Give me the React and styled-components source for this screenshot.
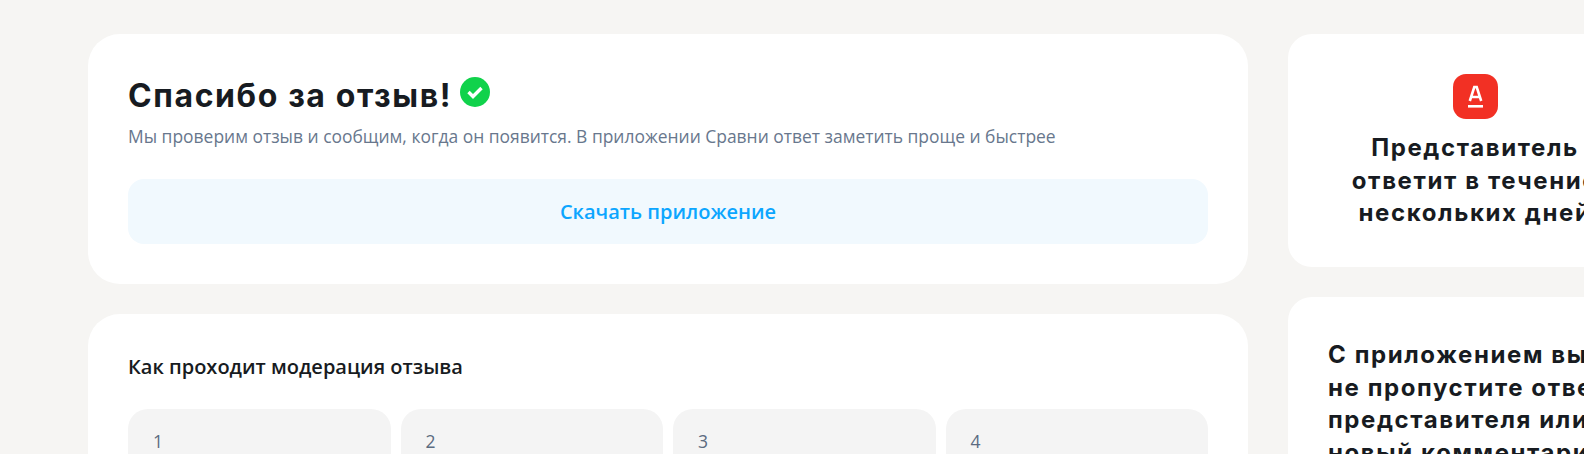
import * as React from "react";
import styled, {createGlobalStyle} from "styled-components";

const GlobalStyle = createGlobalStyle`
  html, body {
    margin: 0;
    padding: 0;
    height: 454px;
    overflow: hidden;
    background: #f6f5f3;
  }
  * {
    box-sizing: border-box;
  }
`;

const Page = styled.div`
  display: grid;
  grid-template-columns: 1160px 374px;
  column-gap: 40px;
  width: 1662px;
  padding: 34px 0 0 88px;
  font-family: "Open Sans", "Liberation Sans", sans-serif;
  color: #171b21;
`;

const Column = styled.div`
  display: flex;
  flex-direction: column;
  gap: 30px;
`;

const Card = styled.section`
  background: #fff;
  border-radius: ${props => props.$radius}px;
  padding: ${props => props.$padding};
`;

const Title = styled.h1`
  display: flex;
  align-items: flex-start;
  gap: 8px;
  margin: 0;
  font-family: "Inter", sans-serif;
  font-size: 32px;
  font-weight: 700;
  letter-spacing: 1.6px;
  line-height: 44px;
`;

const CheckIcon = styled.svg`
  width: 30px;
  height: 30px;
  margin-top: 3px;
`;

const Subtitle = styled.p`
  margin: 6px 0 0;
  font-size: 17.45px;
  line-height: 24px;
  color: #68778d;
`;

const DownloadButton = styled.button`
  display: block;
  width: 100%;
  height: 65px;
  margin-top: 31px;
  border: 0;
  border-radius: 16px;
  background: #f1f9fe;
  color: #0ca6ff;
  font-family: inherit;
  font-size: 20px;
  font-weight: 600;
`;

const SectionTitle = styled.h2`
  margin: 0;
  font-size: 20px;
  font-weight: 600;
  line-height: 26px;
`;

const Steps = styled.div`
  display: grid;
  grid-template-columns: repeat(4, 1fr);
  gap: 10px;
  margin-top: 29px;
`;

const Step = styled.div`
  height: 120px;
  padding: 20px 25px;
  border-radius: 20px;
  background: #f4f4f4;
  color: #5b6b80;
  font-size: 17.5px;
  font-weight: 500;
  line-height: 24px;
`;

const AgentCard = styled(Card)`
  display: flex;
  flex-direction: column;
  align-items: center;
  text-align: center;
`;

const Logo = styled.svg`
  width: 45px;
  height: 45px;
  margin-bottom: 13px;
`;

const SideText = styled.div`
  font-family: "Inter", sans-serif;
  font-size: 24px;
  font-weight: 700;
  letter-spacing: 1.6px;
  line-height: 32.5px;
`;

const App = () => (
    <Page>
        <GlobalStyle/>
        <Column>
            <Card $radius={32} $padding="40px">
                <Title>
                    Спасибо за отзыв!
                    <CheckIcon viewBox="0 0 30 30">
                        <circle cx="15" cy="15" r="15" fill="#10d24b"/>
                        <path d="M8.5 15l4.5 4.5 8.5-8.5" fill="none" stroke="#fff" strokeWidth="3.4"/>
                    </CheckIcon>
                </Title>
                <Subtitle>
                    Мы проверим отзыв и сообщим, когда он появится. В приложении Сравни ответ заметить проще и быстрее
                </Subtitle>
                <DownloadButton>Скачать приложение</DownloadButton>
            </Card>
            <Card $radius={32} $padding="40px">
                <SectionTitle>Как проходит модерация отзыва</SectionTitle>
                <Steps>
                    <Step>1</Step>
                    <Step>2</Step>
                    <Step>3</Step>
                    <Step>4</Step>
                </Steps>
            </Card>
        </Column>
        <Column>
            <AgentCard $radius={24} $padding="40px 20px 37.5px">
                <Logo viewBox="0 0 45 45">
                    <rect width="45" height="45" rx="13" fill="#f23024"/>
                    <path d="M16.8 27l4.5-14h2.4l4.5 14M18.5 23h8" fill="none" stroke="#fff" strokeWidth="2.6"/>
                    <rect x="15" y="31" width="15" height="2.6" fill="#fff"/>
                </Logo>
                <SideText>Представитель<br/>ответит в течение<br/>нескольких дней</SideText>
            </AgentCard>
            <Card $radius={24} $padding="42px 40px">
                <SideText>С приложением вы<br/>не пропустите ответ<br/>представителя или<br/>новый комментарий</SideText>
            </Card>
        </Column>
    </Page>
);

export default App;
